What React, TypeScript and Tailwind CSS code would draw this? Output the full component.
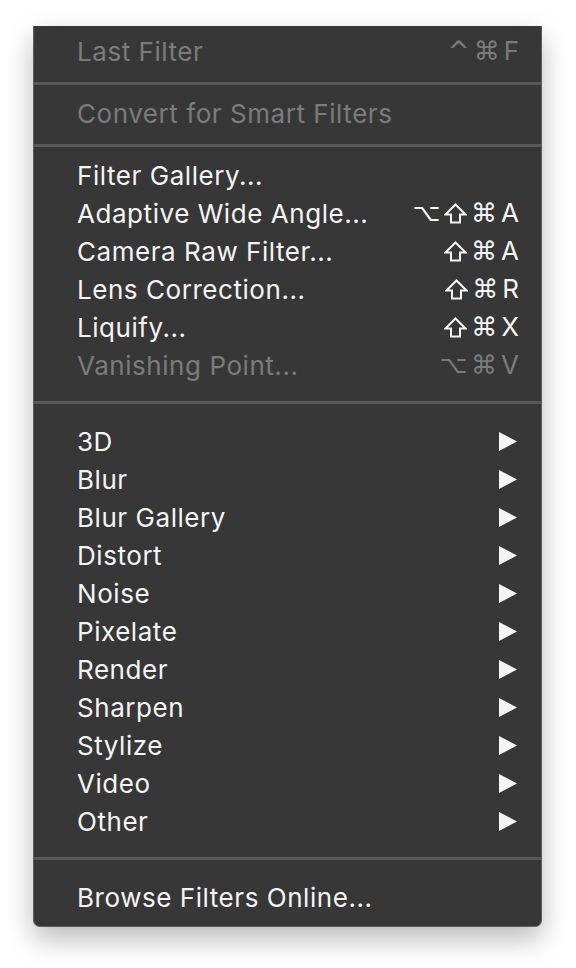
import React from "react";

type Item = { label: string; keys?: string[]; disabled?: boolean; sub?: boolean };

const groups: { items: Item[]; sep: "sm" | "lg" }[] = [
  { items: [{ label: "Last Filter", keys: ["^", "⌘", "F"], disabled: true }], sep: "sm" },
  { items: [{ label: "Convert for Smart Filters", disabled: true }], sep: "sm" },
  {
    items: [
      { label: "Filter Gallery..." },
      { label: "Adaptive Wide Angle...", keys: ["⌥", "⇧", "⌘", "A"] },
      { label: "Camera Raw Filter...", keys: ["⇧", "⌘", "A"] },
      { label: "Lens Correction...", keys: ["⇧", "⌘", "R"] },
      { label: "Liquify...", keys: ["⇧", "⌘", "X"] },
      { label: "Vanishing Point...", keys: ["⌥", "⌘", "V"], disabled: true },
    ],
    sep: "lg",
  },
  {
    items: ["3D", "Blur", "Blur Gallery", "Distort", "Noise", "Pixelate", "Render", "Sharpen", "Stylize", "Video", "Other"].map(
      (label) => ({ label, sub: true })
    ),
    sep: "lg",
  },
  { items: [{ label: "Browse Filters Online..." }], sep: "sm" },
];

const inter = { fontFamily: "Inter, 'Noto Sans', sans-serif" };
const dejavu = { fontFamily: "'DejaVu Sans', sans-serif" };

function Key({ k }: { k: string }) {
  if (k === "⇧") {
    // shift glyph drawn to match the outline arrow
    return (
      <svg width="23" height="21" viewBox="0 0 23 21">
        <path d="M11.5 1.5 L21.5 11.5 H16 V19.5 H7 V11.5 H1.5 Z" fill="none" stroke="currentColor" strokeWidth="2" strokeLinejoin="miter" />
      </svg>
    );
  }
  if (/[A-Z]/.test(k)) {
    return (
      <span className="text-[26px] leading-none" style={inter}>
        {k}
      </span>
    );
  }
  return (
    <span className={k === "⌥" ? "text-[24px] leading-none" : "text-[26px] leading-none"} style={dejavu}>
      {k}
    </span>
  );
}

function Row({ item }: { item: Item }) {
  const color = item.disabled ? "text-[#7b7b7b]" : "text-[#f4f4f4]";
  return (
    <div className={`flex h-[38px] items-center justify-between pl-[43px] pr-[22px] ${color}`}>
      <span className="pt-[1px] text-[26px] tracking-[0.55px]" style={inter}>
        {item.label}
      </span>
      {item.keys && (
        <span className="flex items-center gap-[4px]">
          {item.keys.map((k, i) => (
            <Key key={i} k={k} />
          ))}
        </span>
      )}
      {item.sub && (
        <svg width="18" height="19" viewBox="0 0 18 19" className="mr-[2px]">
          <polygon points="0,0 18,9.5 0,19" fill="#f4f4f4" />
        </svg>
      )}
    </div>
  );
}

export default function App() {
  return (
    <div className="min-h-[968px] w-[576px] bg-white pt-[26px]">
      <div className="ml-[33px] w-[509px] rounded-b-[7px] border-x border-b border-[#5e5e5e] bg-[#373737] pb-[10px] pt-[6px] shadow-[0_12px_28px_rgba(0,0,0,0.28)]">
        {groups.map((g, gi) => (
          <div key={gi}>
            {g.items.map((it) => (
              <Row key={it.label} item={it} />
            ))}
            {gi < groups.length - 1 &&
              (g.sep === "sm" ? (
                <div className="pb-[9px] pt-[12px]">
                  <div className="h-[3px] bg-[#585858]" />
                </div>
              ) : (
                <div className="pb-[18px] pt-[17px]">
                  <div className="h-[3px] bg-[#585858]" />
                </div>
              ))}
          </div>
        ))}
      </div>
    </div>
  );
}
